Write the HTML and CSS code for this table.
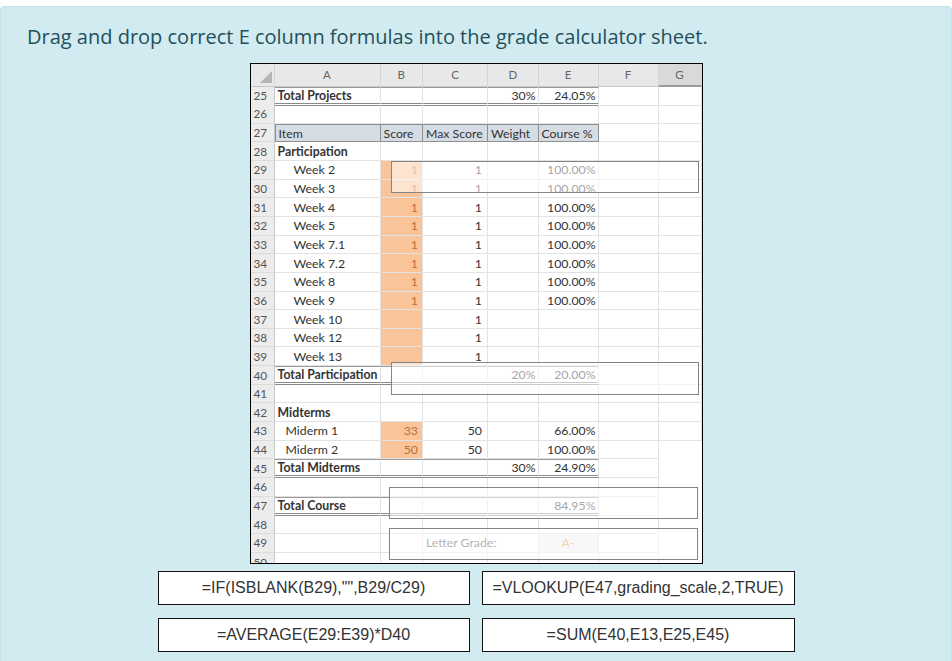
FILE: index.html
```html
<!DOCTYPE html>
<html lang="en">
<head>
<meta charset="utf-8">
<title>Grade calculator</title>
<link rel="stylesheet" href="styles.css">
</head>
<body>
<div class="panel">
  <p class="title">Drag and drop correct E column formulas into the grade calculator sheet.</p>

  <div class="sheet-wrap">
    <div class="sheet">
      <div class="r hdr">
        <div class="corner"><svg width="12" height="12" viewBox="0 0 12 12"><polygon points="12,0 12,12 0,12" fill="#b5b5b5"/></svg></div>
        <div class="h">A</div><div class="h">B</div><div class="h">C</div><div class="h">D</div><div class="h">E</div><div class="h">F</div><div class="h sel">G</div>
      </div>

      <div class="r"><div class="n">25</div><div class="c b t">Total Projects</div><div class="c t"></div><div class="c t"></div><div class="c t num">30%</div><div class="c t num">24.05%</div><div class="c"></div><div class="c"></div></div>
      <div class="r"><div class="n">26</div><div class="c"></div><div class="c"></div><div class="c"></div><div class="c"></div><div class="c"></div><div class="c"></div><div class="c"></div></div>
      <div class="r"><div class="n">27</div><div class="c hd first">Item</div><div class="c hd">Score</div><div class="c hd">Max Score</div><div class="c hd">Weight</div><div class="c hd">Course %</div><div class="c"></div><div class="c"></div></div>
      <div class="r"><div class="n">28</div><div class="c b">Participation</div><div class="c"></div><div class="c"></div><div class="c"></div><div class="c"></div><div class="c"></div><div class="c"></div></div>

      <div class="r"><div class="n">29</div><div class="c ind">Week 2</div><div class="c or num">1</div><div class="c num pc">1</div><div class="c"></div><div class="c num">100.00%</div><div class="c"></div><div class="c"></div></div>
      <div class="r"><div class="n">30</div><div class="c ind">Week 3</div><div class="c or num">1</div><div class="c num pc">1</div><div class="c"></div><div class="c num">100.00%</div><div class="c"></div><div class="c"></div></div>
      <div class="r"><div class="n">31</div><div class="c ind">Week 4</div><div class="c or num">1</div><div class="c num pc">1</div><div class="c"></div><div class="c num">100.00%</div><div class="c"></div><div class="c"></div></div>
      <div class="r"><div class="n">32</div><div class="c ind">Week 5</div><div class="c or num">1</div><div class="c num pc">1</div><div class="c"></div><div class="c num">100.00%</div><div class="c"></div><div class="c"></div></div>
      <div class="r"><div class="n">33</div><div class="c ind">Week 7.1</div><div class="c or num">1</div><div class="c num pc">1</div><div class="c"></div><div class="c num">100.00%</div><div class="c"></div><div class="c"></div></div>
      <div class="r"><div class="n">34</div><div class="c ind">Week 7.2</div><div class="c or num">1</div><div class="c num pc">1</div><div class="c"></div><div class="c num">100.00%</div><div class="c"></div><div class="c"></div></div>
      <div class="r"><div class="n">35</div><div class="c ind">Week 8</div><div class="c or num">1</div><div class="c num pc">1</div><div class="c"></div><div class="c num">100.00%</div><div class="c"></div><div class="c"></div></div>
      <div class="r"><div class="n">36</div><div class="c ind">Week 9</div><div class="c or num">1</div><div class="c num pc">1</div><div class="c"></div><div class="c num">100.00%</div><div class="c"></div><div class="c"></div></div>
      <div class="r"><div class="n">37</div><div class="c ind">Week 10</div><div class="c or"></div><div class="c num pc">1</div><div class="c"></div><div class="c"></div><div class="c"></div><div class="c"></div></div>
      <div class="r"><div class="n">38</div><div class="c ind">Week 12</div><div class="c or"></div><div class="c num pc">1</div><div class="c"></div><div class="c"></div><div class="c"></div><div class="c"></div></div>
      <div class="r"><div class="n">39</div><div class="c ind">Week 13</div><div class="c or"></div><div class="c num pc">1</div><div class="c"></div><div class="c"></div><div class="c"></div><div class="c"></div></div>

      <div class="r"><div class="n">40</div><div class="c b t">Total Participation</div><div class="c t"></div><div class="c t"></div><div class="c t num">20%</div><div class="c t num">20.00%</div><div class="c"></div><div class="c"></div></div>
      <div class="r"><div class="n">41</div><div class="c"></div><div class="c"></div><div class="c"></div><div class="c"></div><div class="c"></div><div class="c"></div><div class="c"></div></div>
      <div class="r"><div class="n">42</div><div class="c b">Midterms</div><div class="c"></div><div class="c"></div><div class="c"></div><div class="c"></div><div class="c"></div><div class="c"></div></div>
      <div class="r"><div class="n">43</div><div class="c ind2">Miderm 1</div><div class="c or num">33</div><div class="c num pc2">50</div><div class="c"></div><div class="c num">66.00%</div><div class="c"></div><div class="c"></div></div>
      <div class="r"><div class="n">44</div><div class="c ind2">Miderm 2</div><div class="c or num">50</div><div class="c num pc2">50</div><div class="c"></div><div class="c num">100.00%</div><div class="c"></div><div class="c blank"></div></div>
      <div class="r"><div class="n">45</div><div class="c b t">Total Midterms</div><div class="c t"></div><div class="c t"></div><div class="c t num">30%</div><div class="c t num">24.90%</div><div class="c"></div><div class="c blank"></div></div>
      <div class="r"><div class="n">46</div><div class="c"></div><div class="c"></div><div class="c"></div><div class="c"></div><div class="c"></div><div class="c"></div><div class="c blank"></div></div>
      <div class="r"><div class="n">47</div><div class="c b t">Total Course</div><div class="c t"></div><div class="c t"></div><div class="c t"></div><div class="c t num">84.95%</div><div class="c"></div><div class="c blank"></div></div>
      <div class="r"><div class="n">48</div><div class="c"></div><div class="c"></div><div class="c"></div><div class="c"></div><div class="c"></div><div class="c"></div><div class="c blank"></div></div>
      <div class="r"><div class="n">49</div><div class="c"></div><div class="c"></div><div class="c grey">Letter Grade:</div><div class="c"></div><div class="c grade">A-</div><div class="c"></div><div class="c blank"></div></div>
      <div class="r"><div class="n cut">50</div><div class="c"></div><div class="c"></div><div class="c"></div><div class="c"></div><div class="c"></div><div class="c"></div><div class="c blank"></div></div>
    </div>

    <div class="drop z1"></div>
    <div class="drop z2"></div>
    <div class="drop z3"></div>
    <div class="drop z4"></div>
  </div>

  <div class="choices">
    <div class="choice">=IF(ISBLANK(B29),"",B29/C29)</div>
    <div class="choice">=VLOOKUP(E47,grading_scale,2,TRUE)</div>
    <div class="choice">=AVERAGE(E29:E39)*D40</div>
    <div class="choice">=SUM(E40,E13,E25,E45)</div>
  </div>
</div>
</body>
</html>
```

FILE: styles.css
```css
html, body {
  margin: 0;
  padding: 0;
  background: #ffffff;
}
body {
  padding-top: 6px;
  overflow: hidden;
}
.panel {
  box-sizing: border-box;
  width: 952px;
  min-height: 720px;
  background: #d1ebf0;
  border: 1px solid #bfe4eb;
  border-radius: 4px;
  padding: 16px 0 0 0;
}
.title {
  margin: 0 0 13px 26px;
  font-family: "Open Sans", sans-serif;
  font-size: 20px;
  line-height: 27px;
  color: #24505c;
}
.sheet-wrap {
  position: relative;
  width: 453px;
  margin: 0 auto;
}
.sheet {
  box-sizing: border-box;
  width: 453px;
  height: 501px;
  border: 1px solid #000;
  background: #fff;
  overflow: hidden;
  font-family: Lato, "Open Sans", sans-serif;
  font-size: 12.3px;
  color: #333;
}
.r {
  display: grid;
  grid-template-columns: 24px 106px 42.5px 65px 50.5px 60px 60px 43px;
  height: 18.65px;
}
.hdr {
  height: 22.5px;
  background: #e8e8e8;
}
.corner {
  display: flex;
  align-items: flex-end;
  justify-content: flex-end;
  padding: 0 2px 3px 0;
  border-right: 1px solid #d4d4d4;
  border-bottom: 1px solid #c8c8c8;
}
.h {
  display: flex;
  align-items: center;
  justify-content: center;
  color: #666;
  font-size: 11.5px;
  border-right: 1px solid #d4d4d4;
  border-bottom: 1px solid #c8c8c8;
}
.h.sel {
  background: #d9d9d9;
  border-bottom: 2px solid #9a9a9a;
}
.n {
  box-sizing: border-box;
  display: flex;
  align-items: center;
  padding-left: 3px;
  background: #ececec;
  color: #555;
  font-size: 11.8px;
  border-right: 1px solid #c8c8c8;
  border-bottom: 1px solid #dcdcdc;
}
.n.cut {
  align-items: flex-start;
  padding-top: 2px;
}
.c {
  box-sizing: border-box;
  display: flex;
  align-items: center;
  padding: 0 3px;
  white-space: nowrap;
  border-right: 1px solid #e2e2e2;
  border-bottom: 1px solid #e2e2e2;
  min-width: 0;
}
.c.blank {
  border-color: #fff;
}
.b { font-weight: bold; }
.ind { padding-left: 19px; }
.ind2 { padding-left: 11px; }
.num { justify-content: flex-end; padding-right: 2px; }
.pc { padding-right: 5px; }
.pc2 { padding-right: 5px; }
.or {
  background: #f9c49a;
  color: #b8703a;
  padding-right: 4px;
}
.hd {
  background: #d6dce4;
  border-top: 1px solid #8f8f8f;
  border-right: 1px solid #8f8f8f;
  border-bottom: 1px solid #8f8f8f;
}
.hd.first {
  border-left: 1px solid #8f8f8f;
}
.t {
  border-bottom: 3px double #8a8a8a;
  border-top: 1px solid #9a9a9a;
}
.grey {
  color: #555;
  overflow: visible;
}
.grade {
  background: #f0f0f0;
  color: #ed9a45;
  justify-content: center;
}
.drop {
  position: absolute;
  box-sizing: border-box;
  background: rgba(255, 255, 255, 0.55);
  border: 1px solid #858585;
}
.z1 { left: 141px; top: 98px; width: 308px; height: 32px; }
.z2 { left: 141px; top: 299px; width: 308px; height: 33px; }
.z3 { left: 139px; top: 424px; width: 309px; height: 32px; }
.z4 { left: 139px; top: 465px; width: 309px; height: 32px; }
.choices {
  display: grid;
  grid-template-columns: 312px 313px;
  column-gap: 12px;
  row-gap: 13px;
  justify-content: center;
  margin-top: 7px;
}
.choice {
  box-sizing: border-box;
  height: 34px;
  display: flex;
  align-items: center;
  justify-content: center;
  background: #fff;
  border: 1px solid #111;
  font-family: "Liberation Sans", Arial, sans-serif;
  font-size: 16px;
  color: #333;
  white-space: nowrap;
}
```
